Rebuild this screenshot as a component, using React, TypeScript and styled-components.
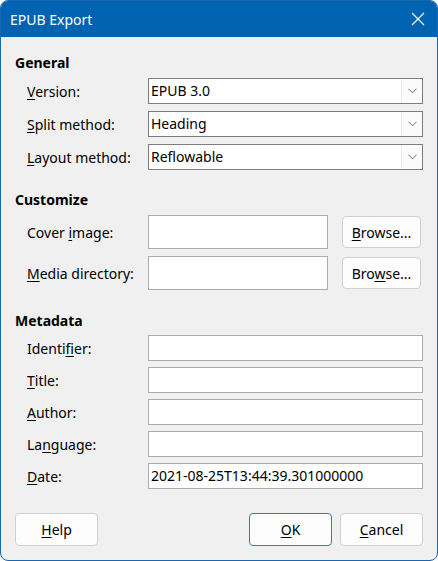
import { FC, Fragment, ReactNode } from "react";
import styled, { createGlobalStyle } from "styled-components";

const GlobalStyle = createGlobalStyle`
    html, body {
        margin: 0;
        padding: 0;
        background: #ffffff;
    }

    * {
        box-sizing: border-box;
    }
`;

const Window = styled.div`
    width: 438px;
    height: 561px;
    display: flex;
    flex-direction: column;
    border: 1px solid #1766b4;
    border-radius: 8px;
    overflow: hidden;
    background: #f0f0f0;
    font-family: "Noto Sans", "DejaVu Sans", sans-serif;
    font-size: 14px;
    color: #000;
`;

const TitleBar = styled.div`
    height: 36px;
    flex-shrink: 0;
    display: flex;
    align-items: center;
    justify-content: space-between;
    padding: 0 12px 0 9px;
    background: #0063b1;
    color: #fff;
`;

const CloseButton = styled.span`
    display: flex;
    width: 14px;
    height: 14px;
`;

const Content = styled.div`
    flex: 1;
    display: flex;
    flex-direction: column;
    padding: 16px 14px 14px;
`;

const Section = styled.section<{ $top: number }>`
    margin-top: ${props => props.$top}px;
`;

const Heading = styled.div<{ $gap: number }>`
    height: 20px;
    line-height: 20px;
    font-weight: 700;
    margin-bottom: ${props => props.$gap}px;
`;

const FieldGrid = styled.div<{ $rowGap: number; $cols: string }>`
    display: grid;
    grid-template-columns: ${props => props.$cols};
    row-gap: ${props => props.$rowGap}px;
    margin-left: 12px;
    align-items: center;
`;

const Label = styled.span`
    white-space: nowrap;
`;

const Key = styled.u`
    text-decoration: underline;
    text-underline-offset: 2px;
    text-decoration-thickness: 1px;
`;

const Combo = styled.div`
    height: 26px;
    display: flex;
    border: 1px solid #7d7d7d;
    background: #fff;
`;

const ComboText = styled.span`
    flex: 1;
    line-height: 24px;
    padding-left: 2px;
`;

const ComboArrow = styled.span`
    width: 21px;
    display: flex;
    align-items: center;
    justify-content: center;
    border-left: 1px solid #ececec;
    background: #fbfbfb;
`;

const TextInput = styled.div<{ $height: number }>`
    height: ${props => props.$height}px;
    line-height: ${props => props.$height - 2}px;
    border: 1px solid #ababab;
    background: #fff;
    padding-left: 2px;
    white-space: nowrap;
`;

const Button = styled.button<{ $default?: boolean; $width: number; $height: number }>`
    width: ${props => props.$width}px;
    height: ${props => props.$height}px;
    padding: 0;
    font: inherit;
    color: #000;
    background: #fdfdfd;
    border: 1px solid ${props => (props.$default ? "#2f7bc4" : "#d0d0d0")};
    border-radius: 4px;
`;

const BrowseButton = styled(Button)`
    justify-self: start;
    margin-left: 14px;
`;

const ButtonRow = styled.div`
    display: flex;
    gap: 8px;
    margin-top: 24px;
`;

const Spacer = styled.div`
    flex: 1;
`;

const Chevron: FC = () => (
    <svg width="9" height="6" viewBox="0 0 9 6">
        <path d="M0.5 0.8 L4.5 4.8 L8.5 0.8" fill="none" stroke="#666" strokeWidth="1" />
    </svg>
);

// label text with its mnemonic letter underlined
const Mn: FC<{ before?: string; k: string; after?: string }> = ({ before = "", k, after = "" }) => (
    <>
        {before}
        <Key>{k}</Key>
        {after}
    </>
);

const ComboBox: FC<{ value: string }> = ({ value }) => (
    <Combo>
        <ComboText>{value}</ComboText>
        <ComboArrow>
            <Chevron />
        </ComboArrow>
    </Combo>
);

const generalRows: { label: ReactNode; value: string }[] = [
    { label: <Mn k="V" after="ersion:" />, value: "EPUB 3.0" },
    { label: <Mn k="S" after="plit method:" />, value: "Heading" },
    { label: <Mn k="L" after="ayout method:" />, value: "Reflowable" },
];

const metaRows: { label: ReactNode; value: string }[] = [
    { label: <Mn before="Identi" k="f" after="ier:" />, value: "" },
    { label: <Mn k="T" after="itle:" />, value: "" },
    { label: <Mn k="A" after="uthor:" />, value: "" },
    { label: <Mn before="La" k="n" after="guage:" />, value: "" },
    { label: <Mn k="D" after="ate:" />, value: "2021-08-25T13:44:39.301000000" },
];

const App: FC = () => {
    return (
        <>
            <GlobalStyle />
            <Window>
                <TitleBar>
                    <span>EPUB Export</span>
                    <CloseButton>
                        <svg width="14" height="14" viewBox="0 0 14 14">
                            <path d="M1 1 L13 13 M13 1 L1 13" stroke="#fff" strokeWidth="1.1" />
                        </svg>
                    </CloseButton>
                </TitleBar>
                <Content>
                    <Section $top={0}>
                        <Heading $gap={5}>General</Heading>
                        <FieldGrid $rowGap={7} $cols="121px 1fr">
                            {generalRows.map((row, i) => (
                                <Fragment key={i}>
                                    <Label>{row.label}</Label>
                                    <ComboBox value={row.value} />
                                </Fragment>
                            ))}
                        </FieldGrid>
                    </Section>

                    <Section $top={20}>
                        <Heading $gap={5}>Customize</Heading>
                        <FieldGrid $rowGap={7} $cols="121px 180px 1fr">
                            <Label>
                                <Mn before="Cover " k="i" after="mage:" />
                            </Label>
                            <TextInput $height={34} />
                            <BrowseButton $width={79} $height={32}>
                                <Mn k="B" after="rowse..." />
                            </BrowseButton>
                            <Label>
                                <Mn k="M" after="edia directory:" />
                            </Label>
                            <TextInput $height={34} />
                            <BrowseButton $width={79} $height={32}>
                                <Mn before="Bro" k="w" after="se..." />
                            </BrowseButton>
                        </FieldGrid>
                    </Section>

                    <Section $top={21}>
                        <Heading $gap={4}>Metadata</Heading>
                        <FieldGrid $rowGap={6} $cols="121px 1fr">
                            {metaRows.map((row, i) => (
                                <Fragment key={i}>
                                    <Label>{row.label}</Label>
                                    <TextInput $height={26}>{row.value}</TextInput>
                                </Fragment>
                            ))}
                        </FieldGrid>
                    </Section>

                    <ButtonRow>
                        <Button $width={83} $height={33}>
                            <Mn k="H" after="elp" />
                        </Button>
                        <Spacer />
                        <Button $default $width={83} $height={33}>
                            <Mn k="O" after="K" />
                        </Button>
                        <Button $width={83} $height={33}>
                            <Mn k="C" after="ancel" />
                        </Button>
                    </ButtonRow>
                </Content>
            </Window>
        </>
    );
};

export default App;
